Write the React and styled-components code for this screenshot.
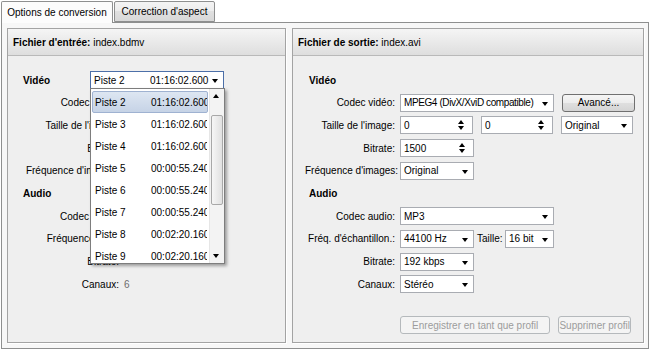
import styled, { createGlobalStyle } from 'styled-components';

const GlobalStyle = createGlobalStyle`
  html, body {
    margin: 0;
    padding: 0;
    background: #ffffff;
  }
  body {
    font-family: "Liberation Sans", Arial, sans-serif;
    font-size: 10px;
    color: #000;
  }
`;

const Window = styled.div`
  width: 650px;
  height: 350px;
  background: #ffffff;
  overflow: hidden;
`;

const TabBar = styled.div`
  display: flex;
  gap: 1px;
  height: 22px;
  padding: 1px 0 0 1px;
  box-sizing: border-box;
`;

const Tab = styled.div`
  box-sizing: border-box;
  width: ${(p) => p.$width}px;
  height: ${(p) => (p.$active ? 22 : 21)}px;
  border: 1px solid #8e8f8f;
  border-bottom: ${(p) => (p.$active ? 'none' : '1px solid #8e8f8f')};
  border-radius: 2px 2px 0 0;
  background: ${(p) =>
    p.$active ? '#fcfcfc' : 'linear-gradient(#f4f4f4, #ececec 50%, #e0e0e0 50%, #d8d8d8)'};
  display: flex;
  align-items: center;
  justify-content: center;
  position: relative;
  z-index: ${(p) => (p.$active ? 2 : 0)};
  white-space: nowrap;
`;

const Pane = styled.div`
  box-sizing: border-box;
  width: 648px;
  height: 327px;
  margin-left: 1px;
  border: 1px solid #8e8f8f;
  background: #f7f7f7;
  padding: 5px 4px 5px 5px;
  display: flex;
  gap: 6px;
`;

const Panel = styled.section`
  box-sizing: border-box;
  width: ${(p) => p.$width}px;
  height: 100%;
  border: 1px solid #a3a3a3;
  box-shadow: 1px 1px 0 #ffffff;
  background: #efefef;
  display: flex;
  flex-direction: column;
`;

const PanelHeader = styled.div`
  flex: none;
  height: 26px;
  border-bottom: 1px solid #b9b9b9;
  background: linear-gradient(#f5f5f5, #dedede);
  padding-left: 5px;
  display: flex;
  align-items: center;
  white-space: pre;

  b {
    font-weight: bold;
  }
`;

const PanelBody = styled.div`
  flex: 1;
  display: flex;
  flex-direction: column;
  gap: 4.7px;
  padding: 15px 12px 8px 12px;
`;

const HeadingRow = styled.div`
  display: grid;
  grid-template-columns: 67px auto;
  align-items: center;
  height: 18px;
  padding-left: ${(p) => p.$indent}px;
`;

const Heading = styled.span`
  font-weight: bold;
`;

const FormRow = styled.div`
  display: grid;
  grid-template-columns: ${(p) => p.$label}px auto;
  column-gap: 5px;
  align-items: center;
  height: 18px;
`;

const Label = styled.span`
  text-align: right;
  white-space: nowrap;
`;

const Value = styled.span`
  color: #6d6d6d;
`;

const Controls = styled.div`
  display: flex;
  align-items: center;
  gap: ${(p) => p.$gap ?? 8}px;
`;

const InlineLabel = styled.span`
  width: 25px;
  white-space: nowrap;
`;

const Field = styled.div`
  box-sizing: border-box;
  position: relative;
  width: ${(p) => p.$w}px;
  height: 18px;
  background: #ffffff;
  border: 1px solid ${(p) => (p.$open ? '#4c6fa8' : '#a9acb2')};
  display: flex;
  align-items: center;
  padding: 0 14px 0 3px;
  white-space: nowrap;
  letter-spacing: ${(p) => (p.$tight ? '-0.4px' : 'normal')};
`;

const DropArrow = styled.span`
  position: absolute;
  right: 5px;
  top: 7px;
  border-left: 3.5px solid transparent;
  border-right: 3.5px solid transparent;
  border-top: 4px solid #000;
`;

const SpinArrows = styled.span`
  position: absolute;
  right: 7px;
  top: 3px;
  width: 7px;
  height: 10px;

  &::before,
  &::after {
    content: '';
    position: absolute;
    left: 0;
    border-left: 3.5px solid transparent;
    border-right: 3.5px solid transparent;
  }
  &::before {
    top: 0;
    border-bottom: 4px solid #000;
  }
  &::after {
    bottom: 0;
    border-top: 4px solid #000;
  }
`;

const Track = styled.span`
  display: grid;
  grid-template-columns: 56px max-content;
  white-space: nowrap;
`;

const TrackList = styled.div`
  box-sizing: border-box;
  position: absolute;
  left: -1px;
  top: 16px;
  width: 135px;
  height: 176px;
  border: 1px solid #7d7d7d;
  background: #ffffff;
  box-shadow: 2px 2px 3px rgba(0, 0, 0, 0.35);
  display: flex;
  z-index: 10;
`;

const ListItems = styled.div`
  flex: 1;
  min-width: 0;
  overflow: hidden;
  padding: 2px 1px 0 1px;
`;

const ListItem = styled.div`
  box-sizing: border-box;
  height: 22px;
  border: 1px solid ${(p) => (p.$selected ? '#9fb2d1' : 'transparent')};
  border-radius: 2px;
  background: ${(p) => (p.$selected ? 'linear-gradient(#dde6f2, #c6d3e6)' : 'transparent')};
  padding-left: 2px;
  display: flex;
  align-items: center;
  overflow: hidden;
`;

const ScrollBar = styled.div`
  flex: none;
  width: 14px;
  background: #f3f3f3;
  border-left: 1px solid #e6e6e6;
  display: flex;
  flex-direction: column;
`;

const ScrollButton = styled.div`
  position: relative;
  height: 14px;
  flex: none;

  &::after {
    content: '';
    position: absolute;
    left: 3px;
    top: 5px;
    border-left: 3.5px solid transparent;
    border-right: 3.5px solid transparent;
    ${(p) => (p.$up ? 'border-bottom: 4px solid #000;' : 'border-top: 4px solid #000;')}
  }
`;

const ScrollThumb = styled.div`
  box-sizing: border-box;
  margin: 12px 1px 0 1px;
  height: 90px;
  border: 1px solid #a8a8a8;
  border-radius: 2px;
  background: linear-gradient(to right, #f6f6f6, #e0e0e0);
`;

const Spacer = styled.div`
  flex: 1;
`;

const ButtonRow = styled.div`
  margin-top: auto;
  display: flex;
  gap: 8px;
  padding-left: 95px;
`;

const Button = styled.button`
  box-sizing: border-box;
  width: ${(p) => p.$w}px;
  height: 18px;
  padding: 0;
  font: inherit;
  color: #000;
  border: 1px solid #707070;
  border-radius: 3px;
  background: linear-gradient(#f5f5f5, #ececec 50%, #dfdfdf 50%, #d4d4d4);
  white-space: nowrap;

  &:disabled {
    border-color: #b5b9bc;
    background: #f4f4f4;
    color: #9c9c9c;
  }
`;

const tracks = [
  ['Piste 2', '01:16:02.600'],
  ['Piste 3', '01:16:02.600'],
  ['Piste 4', '01:16:02.600'],
  ['Piste 5', '00:00:55.240'],
  ['Piste 6', '00:00:55.240'],
  ['Piste 7', '00:00:55.240'],
  ['Piste 8', '00:02:20.160'],
  ['Piste 9', '00:02:20.160'],
];

const Select = ({ w, children, open, tight }) => (
  <Field $w={w} $open={open} $tight={tight}>
    {children}
    <DropArrow />
  </Field>
);

const Spin = ({ w, value }) => (
  <Field $w={w}>
    {value}
    <SpinArrows />
  </Field>
);

const InputPanel = () => (
  <Panel $width={279}>
    <PanelHeader>
      <b>Fichier d'entrée:</b> index.bdmv
    </PanelHeader>
    <PanelBody>
      <HeadingRow $indent={3}>
        <Heading>Vidéo</Heading>
        <Field $w={134} $open>
          <Track>
            <span>Piste 2</span>
            <span>01:16:02.600</span>
          </Track>
          <DropArrow />
          <TrackList>
            <ListItems>
              {tracks.map(([name, time], i) => (
                <ListItem key={name} $selected={i === 0}>
                  <Track>
                    <span>{name}</span>
                    <span>{time}</span>
                  </Track>
                </ListItem>
              ))}
            </ListItems>
            <ScrollBar>
              <ScrollButton $up />
              <ScrollThumb />
              <Spacer />
              <ScrollButton />
            </ScrollBar>
          </TrackList>
        </Field>
      </HeadingRow>
      <FormRow $label={99}>
        <Label>Codec vidéo:</Label>
      </FormRow>
      <FormRow $label={99}>
        <Label>Taille de l'image:</Label>
      </FormRow>
      <FormRow $label={99}>
        <Label>Bitrate:</Label>
      </FormRow>
      <FormRow $label={99}>
        <Label>Fréquence d'images:</Label>
      </FormRow>
      <HeadingRow $indent={3}>
        <Heading>Audio</Heading>
      </HeadingRow>
      <FormRow $label={99}>
        <Label>Codec audio:</Label>
      </FormRow>
      <FormRow $label={99}>
        <Label>Fréquence éch.:</Label>
      </FormRow>
      <FormRow $label={99}>
        <Label>Bitrate:</Label>
      </FormRow>
      <FormRow $label={99}>
        <Label>Canaux:</Label>
        <Value>6</Value>
      </FormRow>
    </PanelBody>
  </Panel>
);

const OutputPanel = () => (
  <Panel $width={352}>
    <PanelHeader>
      <b>Fichier de sortie:</b> index.avi
    </PanelHeader>
    <PanelBody>
      <HeadingRow $indent={4}>
        <Heading>Vidéo</Heading>
      </HeadingRow>
      <FormRow $label={90}>
        <Label>Codec vidéo:</Label>
        <Controls>
          <Select w={154} tight>
            MPEG4 (DivX/XviD compatible)
          </Select>
          <Button $w={73}>Avancé...</Button>
        </Controls>
      </FormRow>
      <FormRow $label={90}>
        <Label>Taille de l'image:</Label>
        <Controls>
          <Spin w={73} value="0" />
          <Spin w={72} value="0" />
          <Select w={72}>Original</Select>
        </Controls>
      </FormRow>
      <FormRow $label={90}>
        <Label>Bitrate:</Label>
        <Controls>
          <Spin w={74} value="1500" />
        </Controls>
      </FormRow>
      <FormRow $label={90}>
        <Label>Fréquence d'images:</Label>
        <Controls>
          <Select w={74}>Original</Select>
        </Controls>
      </FormRow>
      <HeadingRow $indent={4}>
        <Heading>Audio</Heading>
      </HeadingRow>
      <FormRow $label={90}>
        <Label>Codec audio:</Label>
        <Controls>
          <Select w={154}>MP3</Select>
        </Controls>
      </FormRow>
      <FormRow $label={90}>
        <Label>Fréq. d'échantillon.:</Label>
        <Controls $gap={3}>
          <Select w={74}>44100 Hz</Select>
          <InlineLabel>Taille:</InlineLabel>
          <Select w={49}>16 bit</Select>
        </Controls>
      </FormRow>
      <FormRow $label={90}>
        <Label>Bitrate:</Label>
        <Controls>
          <Select w={74}>192 kbps</Select>
        </Controls>
      </FormRow>
      <FormRow $label={90}>
        <Label>Canaux:</Label>
        <Controls>
          <Select w={74}>Stéréo</Select>
        </Controls>
      </FormRow>
      <ButtonRow>
        <Button $w={154} disabled>
          Enregistrer en tant que profil
        </Button>
        <Button $w={73} disabled>
          Supprimer profil
        </Button>
      </ButtonRow>
    </PanelBody>
  </Panel>
);

export default function App() {
  return (
    <Window>
      <GlobalStyle />
      <TabBar>
        <Tab $active $width={112}>
          Options de conversion
        </Tab>
        <Tab $width={101}>Correction d'aspect</Tab>
      </TabBar>
      <Pane>
        <InputPanel />
        <OutputPanel />
      </Pane>
    </Window>
  );
}
